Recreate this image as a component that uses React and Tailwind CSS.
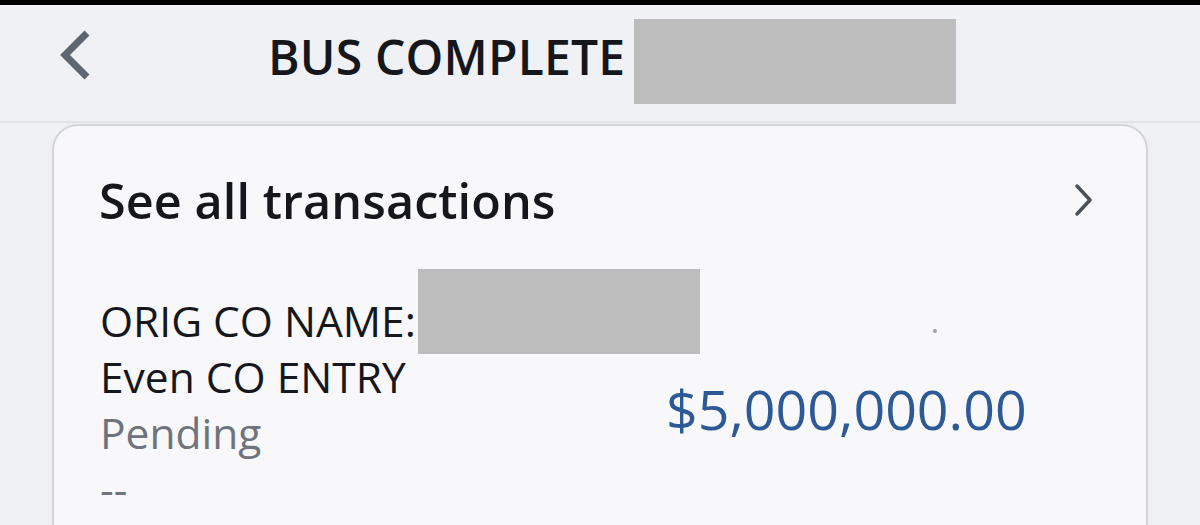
import React from 'react';

const font = { fontFamily: '"Open Sans", "Noto Sans", sans-serif' };

function BackChevron() {
  return (
    <svg width="36" height="52" viewBox="0 0 36 52" fill="none">
      <path d="M30 4 L8 26 L30 48" stroke="#5d6671" strokeWidth="7" strokeLinecap="butt" strokeLinejoin="miter" />
    </svg>
  );
}

function RightChevron() {
  return (
    <svg width="20" height="34" viewBox="0 0 20 34" fill="none">
      <path d="M3 3 L16 17 L3 31" stroke="#4b5058" strokeWidth="3.5" strokeLinecap="round" strokeLinejoin="round" />
    </svg>
  );
}

export default function App() {
  return (
    <div className="h-[525px] w-[1200px] overflow-hidden bg-[#eff0f3] text-[#15171c]" style={font}>
      <div className="h-[5px] bg-black" />
      <header className="flex h-[118px] items-center border-b-2 border-[#e2e3e7] bg-[#f0f1f4]">
        <div className="ml-[57px] mt-[-17px]">
          <BackChevron />
        </div>
        <h1 className="ml-[175px] mt-[-12px] text-[48px] font-semibold leading-none tracking-[0.2px]">BUS COMPLETE</h1>
        <div className="ml-[9px] mt-[-4px] h-[85px] w-[322px] bg-[#bdbdbd]" />
      </header>

      <section className="mx-[52px] mt-[1px] h-[420px] rounded-t-[26px] border-2 border-b-0 border-[#d3d4d9] bg-[#f8f8fa]">
        <div className="flex items-center justify-between pl-[45px] pr-[52px] pt-[50px]">
          <h2 className="text-[48.5px] font-semibold leading-none tracking-[0.1px]">See all transactions</h2>
          <RightChevron />
        </div>

        <div className="relative flex items-center pl-[46px] pt-[68px]">
          <div className="w-[566px] text-[42.5px] leading-[56px]">
            <div className="relative">
              ORIG CO NAME:<span className="text-[#9a9a9a]">'</span>
              <span className="absolute left-[318px] top-[-24px] h-[85px] w-[282px] bg-[#bdbdbd]" />
            </div>
            <div>Even CO ENTRY</div>
            <div className="text-[#6f737b]">Pending</div>
            <div className="text-[#6f737b]">--</div>
          </div>
          <div className="mt-[8px] text-[55.5px] leading-none text-[#2d5997]">$5,000,000.00</div>
          <span className="absolute left-[879px] top-[104px] h-[4px] w-[4px] rounded-full bg-[#9ea0a5]" />
        </div>
      </section>
    </div>
  );
}
